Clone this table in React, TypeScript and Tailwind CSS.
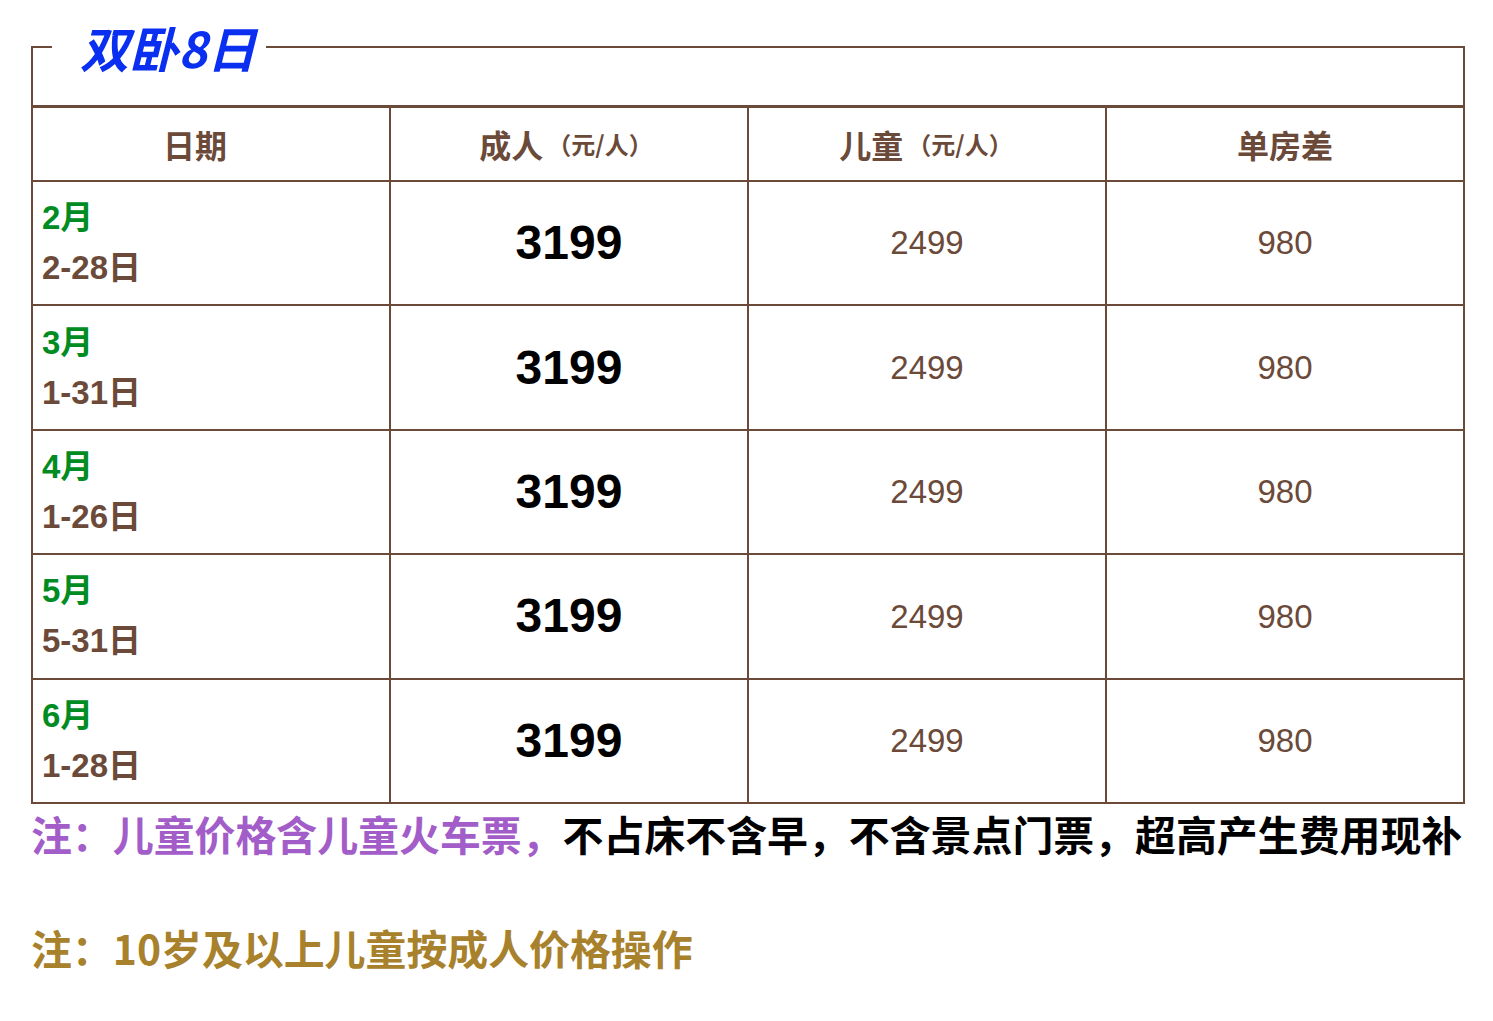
import React from 'react';

const rows = [
  { month: '2月', days: '2-28日' },
  { month: '3月', days: '1-31日' },
  { month: '4月', days: '1-26日' },
  { month: '5月', days: '5-31日' },
  { month: '6月', days: '1-28日' },
];

const headers = [
  { main: '日期', pad: 'pr-[32px]' },
  { main: '成人', sub: '（元/人）', pad: 'pr-[6px]' },
  { main: '儿童', sub: '（元/人）', pad: 'pr-[2px]' },
  { main: '单房差', pad: '' },
];

const font = { fontFamily: '"Liberation Sans", "Noto Sans CJK SC", sans-serif' };
const cjk = { fontFamily: '"Noto Sans CJK SC", "Liberation Sans", sans-serif' };

const App: React.FC = () => {
  return (
    <div className="min-h-screen bg-white px-[31px] pt-[21px]" style={font}>
      <fieldset className="border-2 border-[#6b4a3a] w-[1434px]">
        <legend
          className="ml-[19px] pl-[28px] pr-[10px] leading-[52px] text-[49px] font-bold italic text-[#0a2ff0]"
          style={cjk}
        >
          双卧8日
        </legend>
        <div className="h-[32px]" />

        <div className="grid grid-cols-4 gap-[2px] bg-[#6b4a3a] border-t-[3px] border-[#6b4a3a]">
          {headers.map((h) => (
            <div
              key={h.main}
              className={`bg-white h-[72px] flex items-center justify-center font-bold text-[#6b4a3a] ${h.pad}`}
              style={cjk}
            >
              <span className="text-[32px]">{h.main}</span>
              {h.sub && <span className="text-[24px] ml-[4px]">{h.sub}</span>}
            </div>
          ))}

          {rows.map((r) => (
            <React.Fragment key={r.month}>
              <div className="bg-white h-[122.4px] flex flex-col justify-center pl-[9px] font-bold text-[33px] leading-[50px]">
                <span className="text-[#008c23]">{r.month}</span>
                <span className="text-[#6b4a3a]">{r.days}</span>
              </div>
              <div className="bg-white h-[122.4px] flex items-center justify-center font-bold text-[48px] text-black">
                3199
              </div>
              <div className="bg-white h-[122.4px] flex items-center justify-center text-[33px] text-[#6b4a3a]">
                2499
              </div>
              <div className="bg-white h-[122.4px] flex items-center justify-center text-[33px] text-[#6b4a3a]">
                980
              </div>
            </React.Fragment>
          ))}
        </div>
      </fieldset>

      <p className="mt-[2px] leading-[56px] text-[40.9px] font-bold whitespace-nowrap" style={cjk}>
        <span className="text-[#a35dc9]">注：儿童价格含儿童火车票，</span>
        <span className="text-black">不占床不含早，不含景点门票，超高产生费用现补</span>
      </p>
      <p className="mt-[58px] leading-[56px] text-[40.9px] font-bold whitespace-nowrap text-[#a8812c]" style={cjk}>
        注：10岁及以上儿童按成人价格操作
      </p>
    </div>
  );
};

export default App;
